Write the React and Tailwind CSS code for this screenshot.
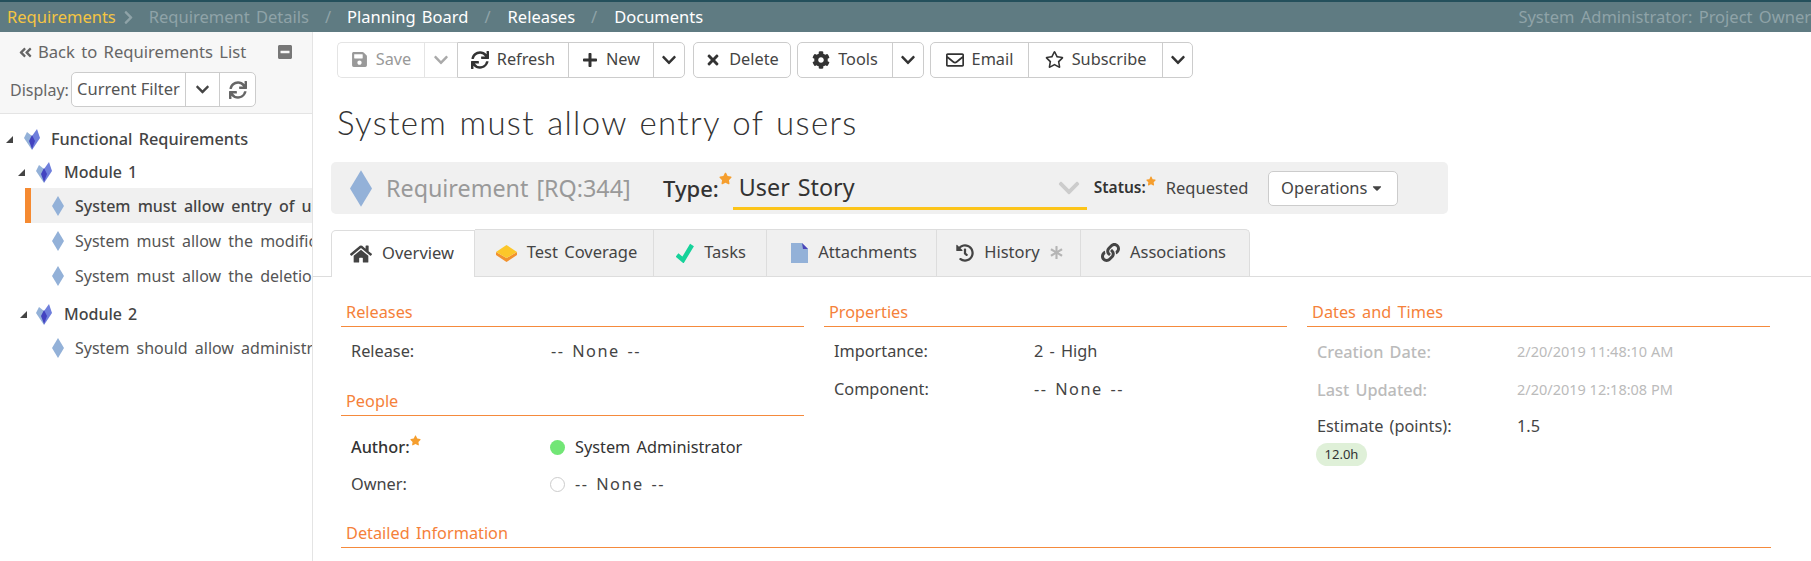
import { FaSave, FaSync, FaPlus, FaTimes, FaCog, FaRegEnvelope, FaRegStar, FaChevronDown, FaHome, FaHistory, FaLink, FaAngleDoubleLeft, FaMinusSquare, FaAsterisk, FaStar, FaCaretDown, FaChevronRight } from 'react-icons/fa'

const Folder = () => (
  <svg width="16" height="21" viewBox="0 0 16 21" className="shrink-0">
    <path d="M0 9 L3 3 L8 7 L8 21 Z" fill="#93b1d8" />
    <path d="M8 7 L13 0 L16 9 L8 21 Z" fill="#6f7fdc" />
    <path d="M8 6 L11 12 L8 20 L5 12 Z" fill="#4343c0" />
  </svg>
)

const Diamond = ({ w = 12, h = 20 }) => (
  <svg width={w} height={h} viewBox="0 0 12 20" className="shrink-0">
    <path d="M6 0 L12 10 L6 20 L0 10 Z" fill="#93b1d8" />
  </svg>
)

const Arrow = () => (
  <svg width="7" height="7" viewBox="0 0 7 7" className="shrink-0">
    <path d="M7 0 V7 H0 Z" fill="#444" />
  </svg>
)

const Star = ({ size = 13 }) => <FaStar size={size} className="text-[#f59e2e]" />

const Box = () => (
  <svg width="21" height="18" viewBox="0 0 21 18">
    <path d="M0 8 L10.5 14 L21 8 V11 L10.5 18 L0 11 Z" fill="#f2922e" />
    <path d="M10.5 1 L21 8 L10.5 14 L0 8 Z" fill="#fcc72a" />
  </svg>
)

const Doc = () => (
  <svg width="17" height="20" viewBox="0 0 17 20">
    <path d="M0 0 H11 L17 6 V20 H0 Z" fill="#93b1d8" />
    <path d="M11 0 L17 6 H12 Z" fill="#4b45b8" />
  </svg>
)

const Tick = () => (
  <svg width="18" height="20" viewBox="0 0 18 20">
    <path d="M1 12 L7 17 L16 2" fill="none" stroke="#16d29a" strokeWidth="4.5" />
  </svg>
)

function Btn({ icon, children, className = '' }) {
  return (
    <div className={`flex items-center justify-center gap-[8px] h-full ${className}`}>
      {icon}
      {children && <span>{children}</span>}
    </div>
  )
}

const Chev = ({ size = 16, className = 'text-[#333]' }) => <FaChevronDown size={size} className={className} />

function Toolbar() {
  return (
    <div className="flex items-center h-[36px] ml-[24px] text-[16.3px] text-[#444]">
      <div className="flex h-full w-[120px] border border-[#e4e4e4] border-r-0 rounded-l-[5px] text-[#999]">
        <Btn className="w-[87px] border-r border-[#e4e4e4] pb-[1px]" icon={<FaSave size={17} />}>Save</Btn>
        <Btn className="flex-1" icon={<Chev className="text-[#aaa]" />} />
      </div>
      <div className="flex h-full w-[228px] border border-[#ccc] rounded-r-[5px]">
        <Btn className="w-[111px] border-r border-[#ccc] pb-[1px]" icon={<FaSync size={18} className="text-[#333]" />}>Refresh</Btn>
        <Btn className="w-[85px] border-r border-[#ccc] pb-[1px]" icon={<FaPlus size={16} className="text-[#333]" />}>New</Btn>
        <Btn className="flex-1" icon={<Chev />} />
      </div>
      <div className="flex h-full w-[98px] ml-[8px] border border-[#ccc] rounded-[5px]">
        <Btn className="flex-1 pb-[1px]" icon={<FaTimes size={16} className="text-[#333]" />}>Delete</Btn>
      </div>
      <div className="flex h-full w-[127px] ml-[6px] border border-[#ccc] rounded-[5px]">
        <Btn className="w-[95px] border-r border-[#ccc] pb-[1px]" icon={<FaCog size={18} className="text-[#333]" />}>Tools</Btn>
        <Btn className="flex-1" icon={<Chev />} />
      </div>
      <div className="flex h-full w-[263px] ml-[6px] border border-[#ccc] rounded-[5px]">
        <Btn className="w-[98px] border-r border-[#ccc] pb-[1px]" icon={<FaRegEnvelope size={18} className="text-[#333]" />}>Email</Btn>
        <Btn className="w-[134px] border-r border-[#ccc] pb-[1px]" icon={<FaRegStar size={19} className="text-[#333]" />}>Subscribe</Btn>
        <Btn className="flex-1" icon={<Chev />} />
      </div>
    </div>
  )
}

function Tab({ icon, label, width, active, extra }) {
  return (
    <div className={`flex items-center justify-center gap-[10px] h-[47px] pb-[1px] text-[16.5px] text-[#444] ${width} ${active ? 'bg-white border-t border-l border-r border-[#ddd] rounded-tl-[5px] relative top-[1px] z-10' : 'bg-[#f0f0f0] border-t border-r border-[#ddd]'}`}>
      {icon}
      <span>{label}</span>
      {extra}
    </div>
  )
}

function Heading({ children, className = '' }) {
  return <div className={`text-[16.3px] leading-[27px] text-[#f5813a] border-b border-[#f58a3c] pl-[5px] ${className}`}>{children}</div>
}

function Row({ label, value, className = '', labelClass = '', valueClass = '', icon }) {
  return (
    <div className={`flex items-center text-[16.3px] h-[24px] ${className}`}>
      <div className={`pl-[10px] shrink-0 flex w-[210px] ${labelClass}`}>{label}</div>
      {icon}
      <div className={valueClass}>{value}</div>
    </div>
  )
}

function TreeItem({ children, selected }) {
  return (
    <div className={`flex items-center h-[35px] ml-[25px] [word-spacing:3px] ${selected ? 'bg-[#f0f0f0] border-l-[6px] border-[#f58a31] font-medium text-[#444]' : 'pl-[6px] text-[#555]'}`}>
      <div className="ml-[21px] mr-[11px]"><Diamond /></div>
      <span className="whitespace-nowrap">{children}</span>
    </div>
  )
}

export default function App() {
  return (
    <div className="w-[1811px] h-[561px] overflow-hidden bg-white font-['Noto_Sans',sans-serif] [word-spacing:2px] text-[#333]">
      <div className="h-[32px] bg-[#5f7b82] border-t-2 border-[#24505c] flex items-center text-[16.5px] whitespace-nowrap">
        <span className="ml-[7px] text-[#f5c542]">Requirements</span>
        <FaChevronRight size={15} className="ml-[5px] text-[#8fa3a8]" />
        <span className="ml-[13px] text-[#8fa3a8]">Requirement Details</span>
        <span className="ml-[16px] text-[#8fa3a8]">/</span>
        <span className="ml-[16px] text-white">Planning Board</span>
        <span className="ml-[16px] text-[#8fa3a8]">/</span>
        <span className="ml-[17px] text-white">Releases</span>
        <span className="ml-[16px] text-[#8fa3a8]">/</span>
        <span className="ml-[17px] text-white">Documents</span>
        <span className="ml-auto text-[#8fa3a8]">System Administrator: Project Owner</span>
      </div>
      <div className="flex h-[529px]">
        <aside className="w-[313px] shrink-0 border-r border-[#e4e4e4] overflow-hidden">
          <div className="h-[82px] bg-[#f7f7f7] border-b border-[#e4e4e4] text-[16px] text-[#666]">
            <div className="flex items-center h-[40px] pl-[18px] pr-[19px]">
              <FaAngleDoubleLeft size={15} />
              <span className="ml-[5px] text-[16.6px]">Back to Requirements List</span>
              <FaMinusSquare size={16} className="ml-auto text-[#777]" />
            </div>
            <div className="flex items-center pl-[10px]">
              <span className="w-[61px]">Display:</span>
              <div className="flex h-[35px] w-[185px] bg-white border border-[#ccc] rounded-[5px]">
                <div className="w-[114px] border-r border-[#ccc] flex items-center justify-center text-[16.5px] text-[#555] whitespace-nowrap [word-spacing:0px]">Current Filter</div>
                <div className="w-[34px] border-r border-[#ccc] flex items-center justify-center"><Chev size={15} className="text-[#444]" /></div>
                <div className="flex-1 flex items-center justify-center"><FaSync size={18} className="text-[#666]" /></div>
              </div>
            </div>
          </div>
          <div className="pt-[13px] text-[16px]">
            <div className="flex items-center h-[24px] pl-[6px] font-medium text-[#444]">
              <Arrow />
              <div className="ml-[11px] mr-[11px]"><Folder /></div>
              <span className="text-[16.3px]">Functional Requirements</span>
            </div>
            <div className="flex items-center h-[24px] mt-[9px] pl-[18px] font-medium text-[#444]">
              <Arrow />
              <div className="ml-[11px] mr-[12px]"><Folder /></div>
              <span>Module 1</span>
            </div>
            <div className="mt-[4px]">
              <TreeItem selected>System must allow entry of users</TreeItem>
              <TreeItem>System must allow the modification of users</TreeItem>
              <TreeItem>System must allow the deletion of users</TreeItem>
            </div>
            <div className="flex items-center h-[24px] mt-[9px] pl-[20px] font-medium text-[#444]">
              <Arrow />
              <div className="ml-[9px] mr-[12px]"><Folder /></div>
              <span>Module 2</span>
            </div>
            <div className="mt-[4px]">
              <TreeItem>System should allow administrators to manage users</TreeItem>
            </div>
          </div>
        </aside>
        <main className="flex-1 min-w-0 pt-[10px]">
          <Toolbar />
          <h1 className="ml-[24px] mt-[21px] h-[46px] font-['Lato',sans-serif] font-light text-[33px] leading-[46px] tracking-[1.34px] text-[#333]">System must allow entry of users</h1>
          <div className="flex items-center ml-[18px] mt-[17px] w-[1117px] h-[52px] bg-[#f0f0f0] rounded-[5px]">
            <div className="ml-[19px]"><Diamond w={22} h={39} /></div>
            <span className="ml-[14px] w-[277px] text-[23.3px] text-[#999]">Requirement [RQ:344]</span>
            <span className="text-[22px] font-medium text-[#333]">Type:</span>
            <div className="self-start mt-[10px]"><Star /></div>
            <div className="flex items-center justify-between ml-[1px] pl-[6px] pr-[6px] w-[354px] h-[42px] self-start mt-[6px] border-b-[3px] border-[#fcc419]">
              <span className="text-[23.3px]">User Story</span>
              <Chev size={24} className="text-[#ccc]" />
            </div>
            <span className="ml-[7px] text-[15.5px] font-semibold">Status:</span>
            <div className="self-start mt-[14px]"><Star size={10} /></div>
            <span className="ml-[10px] text-[16.5px] text-[#444] w-[102px]">Requested</span>
            <div className="flex items-center justify-center gap-[3px] w-[130px] h-[35px] bg-white border border-[#ccc] rounded-[5px] text-[16.5px] text-[#444]">
              Operations<FaCaretDown size={14} />
            </div>
          </div>
          <div className="flex items-end mt-[15px] pl-[18px] border-b border-[#ddd]">
            <Tab active width="w-[144px] pr-[2px]" icon={<FaHome size={22} />} label="Overview" />
            <Tab width="w-[179px] pl-[5px]" icon={<Box />} label="Test Coverage" />
            <Tab width="w-[113px] pl-[2px]" icon={<Tick />} label="Tasks" />
            <Tab width="w-[170px] pl-[5px]" icon={<Doc />} label="Attachments" />
            <Tab width="w-[144px] pl-[2px]" icon={<FaHistory size={18} />} label="History" extra={<FaAsterisk size={13} className="text-[#b5b5b5]" />} />
            <Tab width="w-[169px] rounded-tr-[5px] pr-[3px]" icon={<FaLink size={19} />} label="Associations" />
          </div>
          <div className="grid grid-cols-[463px_463px_463px] gap-x-[20px] mt-[22px] pl-[28px] text-[#444]">
            <div>
              <Heading>Releases</Heading>
              <Row className="mt-[12px]" label="Release:" value="-- None --" valueClass="tracking-[1.5px]" />
              <Heading className="mt-[25px]">People</Heading>
              <Row className="mt-[19px] text-[#333]" label={<><span className="font-medium">Author:</span><Star size={11} /></>} icon={<span className="w-[15px] h-[15px] rounded-full bg-[#72e676] mr-[10px] -ml-[1px]" />} value="System Administrator" />
              <Row className="mt-[13px]" label="Owner:" icon={<span className="w-[15px] h-[15px] rounded-full bg-white border border-[#ccc] mr-[10px] -ml-[1px]" />} value="-- None --" valueClass="tracking-[1.5px]" />
            </div>
            <div>
              <Heading>Properties</Heading>
              <Row className="mt-[12px]" label="Importance:" value="2 - High" />
              <Row className="mt-[14px]" label="Component:" value="-- None --" valueClass="tracking-[1.5px]" />
            </div>
            <div>
              <Heading>Dates and Times</Heading>
              <Row className="mt-[13px] text-[#bbb]" labelClass="font-medium" label="Creation Date:" value="2/20/2019 11:48:10 AM" valueClass="text-[14.5px] [word-spacing:0px]" />
              <Row className="mt-[14px] text-[#bbb]" labelClass="font-medium" label="Last Updated:" value="2/20/2019 12:18:08 PM" valueClass="text-[14.5px] [word-spacing:0px]" />
              <Row className="mt-[12px]" label="Estimate (points):" value="1.5" />
              <div className="ml-[9px] mt-[5px] flex items-center justify-center w-[51px] h-[23px] rounded-full bg-[#dff0d8] text-[13px] text-[#333]">12.0h</div>
            </div>
          </div>
          <Heading className="ml-[28px] w-[1430px] mt-[24px]">Detailed Information</Heading>
        </main>
      </div>
    </div>
  )
}
